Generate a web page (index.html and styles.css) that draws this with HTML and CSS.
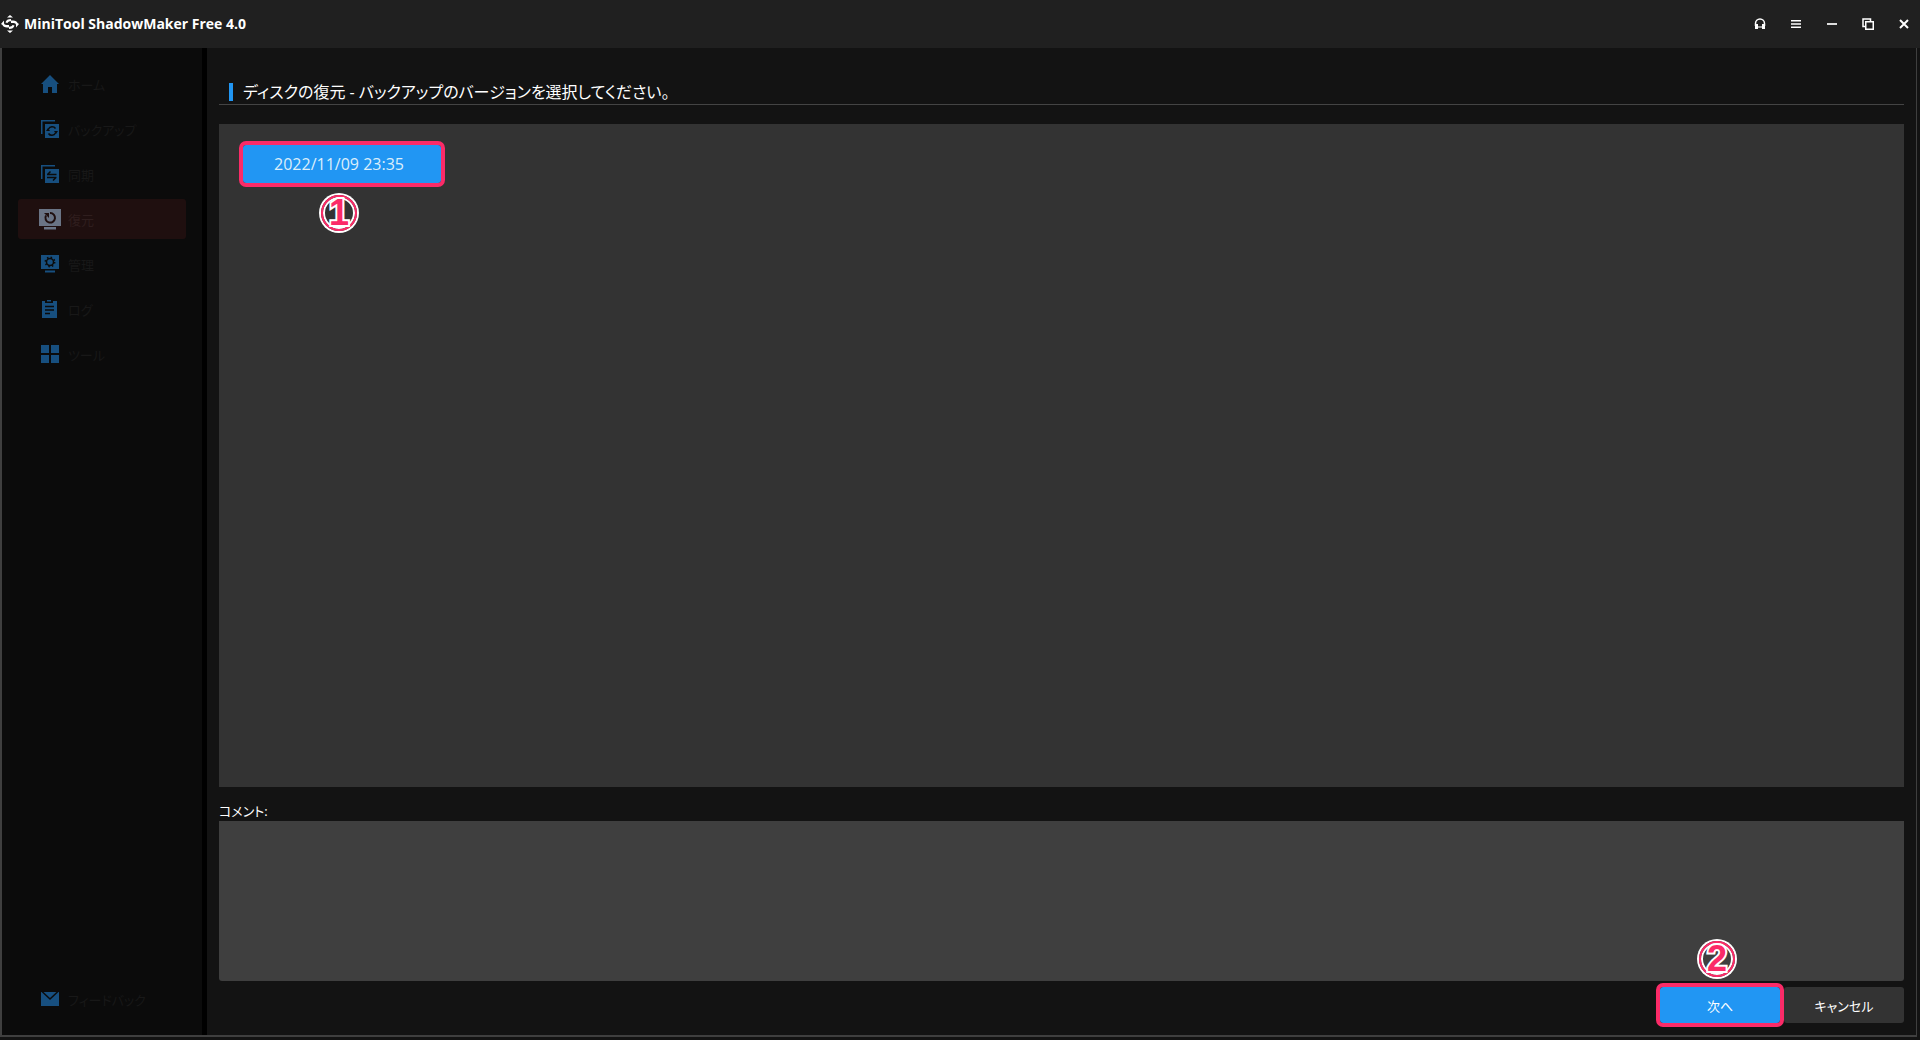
FILE: index.html
```
<!DOCTYPE html>
<html lang="ja">
<head>
  <meta charset="UTF-8" />
  <meta name="viewport" content="width=device-width, initial-scale=1.0"/>
  <title>MiniTool ShadowMaker Free 4.0</title>
  <link rel="stylesheet" href="styles.css">
</head>
<body>
  <header class="titlebar">
    <svg class="logo" viewBox="0 0 18 18" fill="#fff">
      <path d="M6 2.500L9 0l3 2.500zM6 15.500L9 18l3-2.500z"/>
      <path d="M0 9l3-3.500V8c0 1.300 1 2 2.500 2H8v2.500H6c-2.500 0-4-1-4.500-2.500zM18 9l-3 3.500V10c0-1.300-1-2-2.500-2H10V5.500h2c2.500 0 4 1 4.500 2.500z"/>
      <path d="M4.500 7.500C5 5 7 4 10 4v2.300C8 6.300 7 6.800 6.500 8zM13.500 10.500c-.5 2.500-2.500 3.500-5.500 3.500v-2.300c2 0 3-.5 3.500-1.700z"/>
    </svg>
    <h1 class="app-name">MiniTool ShadowMaker Free 4.0</h1>
    <div class="window-buttons">
      <button aria-label="サポート">
        <svg viewBox="0 0 12 12"><path d="M1.500 8V5.500a4.500 4.500 0 0 1 9 0V8" fill="none" stroke="#fff" stroke-width="1.500"/><path d="M1 6h3v5H1zM8 6h3v5H8z" fill="#fff"/><path d="M4 8h4v2H4z" fill="#999"/></svg>
      </button>
      <button aria-label="メニュー">
        <svg viewBox="0 0 12 12" fill="#fff"><path d="M1 2h10v1.500H1zM1 5.250h10v1.500H1zM1 8.500h10V10H1z"/></svg>
      </button>
      <button aria-label="最小化">
        <svg viewBox="0 0 12 12" fill="#ddd"><path d="M1 5h10v2H1z"/></svg>
      </button>
      <button aria-label="元に戻す">
        <svg viewBox="0 0 12 12" fill="none" stroke="#fff" stroke-width="1.500"><path d="M8.500 3V1H1v7.500h2"/><path d="M3.750 3.750h7.500v7.500h-7.500z"/></svg>
      </button>
      <button aria-label="閉じる">
        <svg viewBox="0 0 12 12" stroke="#fff" stroke-width="2"><path d="M2 2l8 8M10 2l-8 8"/></svg>
      </button>
    </div>
  </header>

  <div class="window">
    <nav class="sidebar">
      <a class="nav-item" href="#home">
        <svg viewBox="0 0 18 18"><path d="M9 0l9 9h-2v9h-5v-6H7v6H2V9H0z"/></svg>
        ホーム
      </a>
      <a class="nav-item" href="#backup">
        <svg viewBox="0 0 18 18"><path d="M0 0h14v1.500H1.500V14H0zM4 4h14v14H4z"/><path class="cut" d="M7.500 9a4 4 0 0 1 7-.5M14.500 13a4 4 0 0 1-7 .5"/><path class="cut-fill" d="M5 11l2-3 2 3zM17 11l-2 3-2-3z"/></svg>
        バックアップ
      </a>
      <a class="nav-item" href="#sync">
        <svg viewBox="0 0 18 18"><path d="M0 0h14v1.500H1.500V14H0zM4 4h14v14H4z"/><path class="cut" d="M6 9.500h9.500M9.500 6.500l-3 3M6 12.500h9.500M12 15.500l3-3"/></svg>
        同期
      </a>
      <a class="nav-item active" href="#restore">
        <svg viewBox="0 0 22 21"><path d="M0 0h22v17H0zM5 18h12v2.500H5z"/><path class="cut" d="M7 6.500A4.800 4.800 0 1 0 11 4"/><path class="cut-fill" d="M5 4h5v5z"/></svg>
        復元
      </a>
      <a class="nav-item" href="#manage">
        <svg viewBox="0 0 18 18"><path d="M0 0h18v14H0zM4 15.500h10v2H4z"/><circle class="cut" cx="9" cy="7" r="3.500"/><circle class="cut" cx="9" cy="7" r="4.700" stroke-dasharray="1.500 2.200"/></svg>
        管理
      </a>
      <a class="nav-item" href="#log">
        <svg viewBox="0 0 18 18"><path d="M1 1h3v2h8V1h4v17H1zM6 0h4v1.500H6z"/><path class="cut" d="M4 6.500h9M4 10h9M4 13.500h5"/></svg>
        ログ
      </a>
      <a class="nav-item" href="#tools">
        <svg viewBox="0 0 18 18"><path d="M0 0h8v8H0zM10 0h8v8h-8zM0 10h8v8H0zM10 10h8v8h-8z"/></svg>
        ツール
      </a>
      <a class="nav-item feedback" href="#feedback">
        <svg viewBox="0 0 18 18"><path d="M0 2h18v14H0z"/><path class="cut" d="M1 1.500l8 7.500 8-7.500"/></svg>
        フィードバック
      </a>
    </nav>

    <main class="content">
      <h2 class="heading">ディスクの復元 - バックアップのバージョンを選択してください。</h2>

      <section class="versions">
        <div class="step">
          <button class="version marked">2022/11/09 23:35</button>
          <span class="badge below">1</span>
        </div>
      </section>

      <label class="comment-label" for="comment">コメント:</label>
      <textarea class="comment" id="comment"></textarea>

      <div class="actions">
        <div class="step">
          <button class="btn primary marked">次へ</button>
          <span class="badge above">2</span>
        </div>
        <button class="btn">キャンセル</button>
      </div>
    </main>
  </div>
</body>
</html>
```
FILE: styles.css
```
* {
  box-sizing: border-box;
}
body {
  margin: 0;
  height: 100vh;
  padding-bottom: 3px;
  display: flex;
  flex-direction: column;
  background: #131313;
  color: #fff;
  font-family: "Open Sans", "Noto Sans CJK JP", sans-serif;
  font-size: 13px;
  font-feature-settings: "palt";
}
button, textarea {
  font: inherit;
  font-feature-settings: inherit;
  color: inherit;
  border: none;
  padding: 0;
}

/* title bar */
.titlebar {
  height: 48px;
  flex: none;
  display: flex;
  align-items: center;
  padding: 0 10px 0 1px;
  background: #202020;
}
.logo {
  width: 18px;
  height: 18px;
}
.app-name {
  margin: 0 auto 0 5px;
  font-size: 14px;
  line-height: 20px;
  font-weight: 700;
}
.window-buttons {
  display: flex;
  gap: 24px;
}
.window-buttons button {
  width: 12px;
  height: 12px;
  background: none;
}
.window-buttons svg {
  display: block;
  width: 12px;
  height: 12px;
}

.window {
  flex: 1;
  min-height: 0;
  display: flex;
  margin-right: 3px;
  border: 2px solid #3f3f3f;
  border-width: 0 1px 2px 2px;
}

/* sidebar */
.sidebar {
  width: 205px;
  flex: none;
  display: flex;
  flex-direction: column;
  gap: 5px;
  padding: 16px;
  background: #0b0b0b;
  border-right: 5px solid #000;
}
.nav-item {
  height: 40px;
  display: flex;
  align-items: center;
  gap: 9px;
  padding-left: 23px;
  border-radius: 3px;
  color: #181818;
  text-decoration: none;
}
.nav-item svg {
  width: 18px;
  height: 18px;
  overflow: visible;
  fill: #174f7f;
}
.nav-item .cut {
  fill: none;
  stroke: #0b0b0b;
  stroke-width: 1.5;
}
.nav-item .cut-fill {
  fill: #0b0b0b;
}
.nav-item.active {
  gap: 7px;
  padding-left: 21px;
  background: #1f0f0f;
  color: #2f1e1e;
}
.nav-item.active svg {
  width: 22px;
  height: 21px;
  fill: #6a7485;
}
.nav-item.active .cut {
  stroke: #1f0f0f;
  stroke-width: 2;
}
.nav-item.active .cut-fill {
  fill: #1f0f0f;
}
.feedback {
  margin-top: auto;
}

/* content */
.content {
  flex: 1;
  min-width: 0;
  display: flex;
  flex-direction: column;
  padding: 32px 12px 12px;
}
.heading {
  margin: 0 0 19px;
  padding-left: 10px;
  display: flex;
  align-items: center;
  gap: 10px;
  border-bottom: 1px solid #444;
  font-size: 16px;
  line-height: 24px;
  font-weight: 400;
}
.heading::before {
  content: "";
  width: 4px;
  height: 18px;
  background: #2196f3;
}
.versions {
  flex: 1;
  padding: 21px 24px;
  background: #333;
}
.step {
  position: relative;
  width: fit-content;
}
.version {
  display: block;
  width: 198px;
  height: 38px;
  padding-right: 6px;
  background: #2196f3;
  color: #dceefb;
  font-size: 16px;
}
.comment-label {
  margin-top: 14px;
  line-height: 20px;
}
.comment {
  height: 160px;
  resize: none;
  background: #3f3f3f;
  border-radius: 0 0 3px 3px;
}
.actions {
  display: flex;
  justify-content: flex-end;
  gap: 4px;
  margin-top: 6px;
}
.btn {
  display: block;
  width: 120px;
  height: 36px;
  border-radius: 3px;
  background: #333;
}
.btn.primary {
  background: #2196f3;
}

/* red frames and step numbers */
.marked {
  outline: 4px solid #fb2b68;
  border-radius: 3px;
}
.badge {
  position: absolute;
  left: 50%;
  width: 36px;
  height: 36px;
  margin-left: -21px;
  border: 2px solid #fb2b68;
  border-radius: 50%;
  box-shadow: 0 0 0 2px #fff, inset 0 0 0 2px #fff;
  color: #fb2b68;
  font-family: "Liberation Sans", sans-serif;
  font-size: 36px;
  font-weight: 700;
  line-height: 32px;
  text-align: center;
  -webkit-text-stroke: 4px #fff;
  paint-order: stroke fill;
}
.below {
  top: 50px;
}
.above {
  bottom: 46px;
}
```
